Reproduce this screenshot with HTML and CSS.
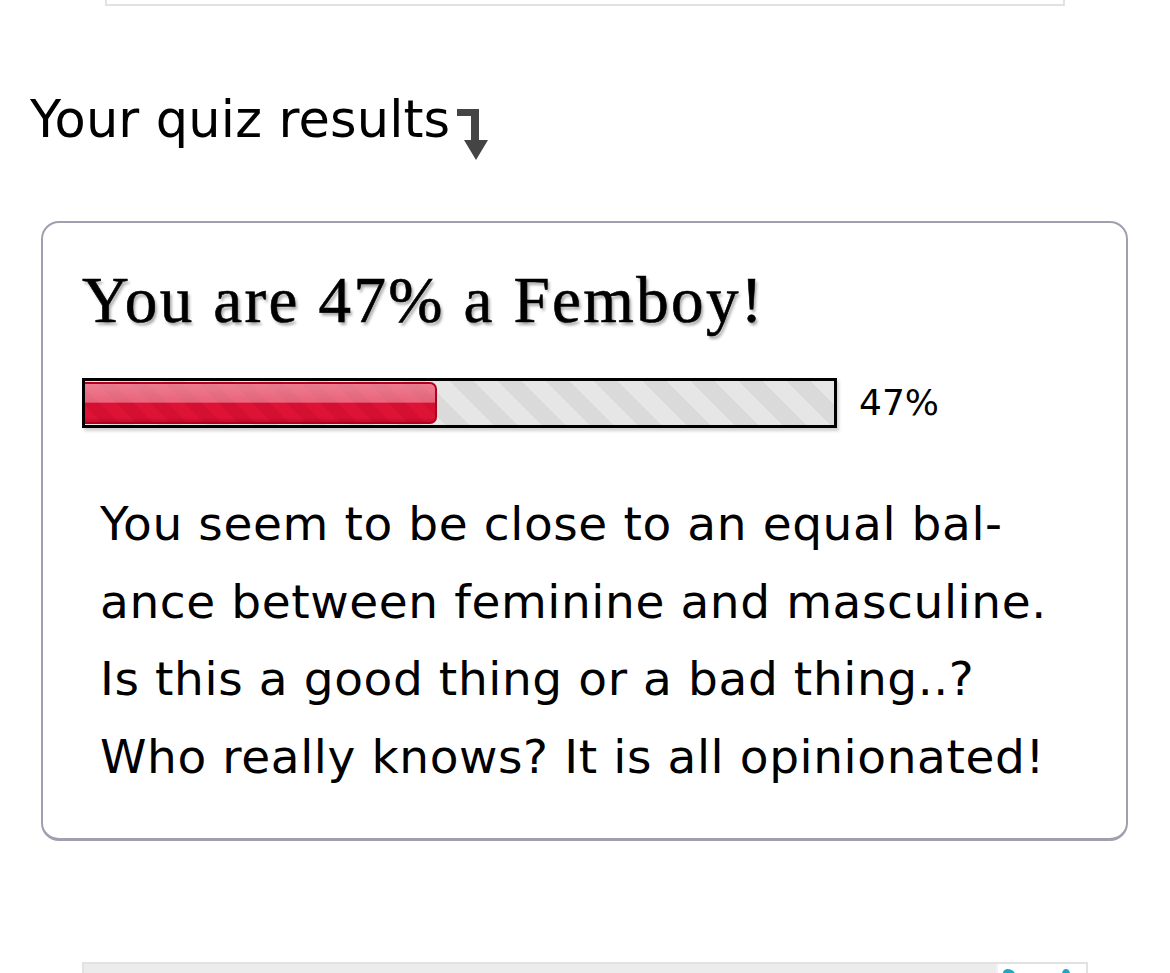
FILE: index.html
```html
<!DOCTYPE html>
<html lang="en">
<head>
<meta charset="utf-8">
<title>Your quiz results</title>
<link rel="stylesheet" href="styles.css">
</head>
<body>
<div class="prev-box"></div>

<h2 class="results-heading">Your quiz results<svg class="down-arrow" width="32" height="51" viewBox="0 0 32 51" aria-hidden="true"><path d="M0 0H22V31H31L19 51L7 31H14V7H0Z" fill="#444"/></svg></h2>

<section class="result-card">
  <h1 class="result-title">You are 47% a Femboy!</h1>
  <div class="bar-row">
    <div class="bar-track">
      <div class="bar-fill" style="width:47%"></div>
    </div>
    <span class="bar-label">47%</span>
  </div>
  <p class="result-text">You seem to be close to an equal bal&shy;ance between feminine and masculine. Is this a good thing or a bad thing..? Who really knows? It is all opinionated!</p>
</section>

<div class="next-box">
  <div class="next-logo">
    <span class="blob blob-a"></span>
    <span class="blob blob-b"></span>
  </div>
</div>
</body>
</html>
```

FILE: styles.css
```css
html, body {
  margin: 0;
  padding: 0;
  background: #ffffff;
  overflow: hidden;
}

body {
  font-family: "DejaVu Sans", Verdana, sans-serif;
  color: #000;
  height: 973px;
}

.prev-box {
  box-sizing: border-box;
  margin-left: 105px;
  width: 960px;
  height: 6px;
  border: 2px solid #e2e2e2;
  border-top: none;
}

.results-heading {
  margin: 84px 0 0 30px;
  font-weight: normal;
  font-size: 51px;
  line-height: 60px;
  letter-spacing: 0.15px;
  height: 71px;
}

.down-arrow {
  margin-left: 7px;
  vertical-align: -23px;
}

.result-card {
  box-sizing: border-box;
  margin: 60px 0 0 41px;
  width: 1087px;
  border: 2px solid #a19eb0;
  border-bottom-width: 3px;
  border-radius: 18px;
  padding: 44px 40px 43px 39px;
}

.result-title {
  margin: 0;
  font-family: "Liberation Serif", Georgia, serif;
  font-weight: normal;
  font-size: 65px;
  line-height: 66px;
  letter-spacing: 2.4px;
  text-shadow: 2px 3px 3px rgba(0, 0, 0, 0.35);
  -webkit-text-stroke: 0.6px #000;
}

.bar-row {
  display: flex;
  align-items: center;
  gap: 22px;
  margin-top: 45px;
}

.bar-track {
  box-sizing: border-box;
  width: 755px;
  height: 50px;
  border: 3px solid #000;
  background: repeating-linear-gradient(45deg, #e6e6e6 0 17px, #dadada 17px 34px);
  box-shadow: 2px 3px 3px rgba(0, 0, 0, 0.18);
  display: flex;
  align-items: stretch;
  padding: 1px 0;
}

.bar-fill {
  box-sizing: border-box;
  border: 2px solid #b0001c;
  border-left: none;
  border-radius: 0 7px 7px 0;
  background:
    linear-gradient(to bottom, rgba(255, 255, 255, 0.45) 0, rgba(255, 255, 255, 0.35) 48%, rgba(255, 255, 255, 0) 50%, rgba(0, 0, 0, 0) 88%, rgba(120, 0, 20, 0.25) 100%),
    repeating-linear-gradient(45deg, #de1235 0 12px, #d50f31 12px 24px);
}

.bar-label {
  font-size: 36px;
  line-height: 40px;
}

.result-text {
  margin: 57px 0 0 18px;
  width: 960px;
  font-size: 47px;
  line-height: 77.5px;
  letter-spacing: 0.6px;
  hyphens: manual;
}

.next-box {
  box-sizing: border-box;
  margin: 121px 0 0 82px;
  width: 1006px;
  height: 40px;
  border: 2px solid #e2e2e2;
  background: #ececec;
  display: flex;
  justify-content: flex-end;
}

.next-logo {
  position: relative;
  width: 88px;
  background: #ffffff;
  border-left: 2px solid #f2f2f2;
}

.blob {
  position: absolute;
  top: 5px;
  width: 10px;
  height: 10px;
  background: #1aa8c8;
  border-radius: 50% 50% 0 0;
}

.blob-a {
  left: 5px;
  width: 12px;
  border-radius: 40% 60% 0 0;
}

.blob-b {
  left: 64px;
  width: 8px;
}
```
